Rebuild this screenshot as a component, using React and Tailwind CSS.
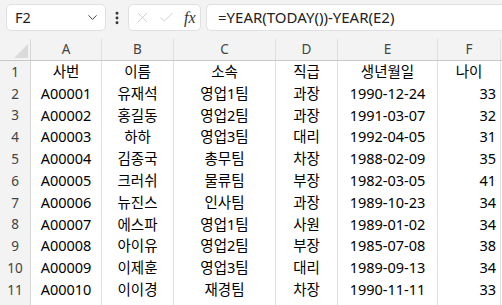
import { ChevronDown, EllipsisVertical, X, Check } from 'lucide-react';

const cols = ['A', 'B', 'C', 'D', 'E', 'F'];

const rows = [
    ['사번', '이름', '소속', '직급', '생년월일', '나이'],
    ['A00001', '유재석', '영업1팀', '과장', '1990-12-24', '33'],
    ['A00002', '홍길동', '영업2팀', '과장', '1991-03-07', '32'],
    ['A00003', '하하', '영업3팀', '대리', '1992-04-05', '31'],
    ['A00004', '김종국', '총무팀', '차장', '1988-02-09', '35'],
    ['A00005', '크러쉬', '물류팀', '부장', '1982-03-05', '41'],
    ['A00006', '뉴진스', '인사팀', '과장', '1989-10-23', '34'],
    ['A00007', '에스파', '영업1팀', '사원', '1989-01-02', '34'],
    ['A00008', '아이유', '영업2팀', '부장', '1985-07-08', '38'],
    ['A00009', '이제훈', '영업3팀', '대리', '1989-09-13', '34'],
    ['A00010', '이이경', '재경팀', '차장', '1990-11-11', '33'],
];

const gridCols = 'grid grid-cols-[31px_71px_72px_102px_62px_100px_63px_1fr]';

const App = () => {
    return (
        <div
            className="w-[502px] h-[305px] overflow-hidden bg-[#f3f3f3] text-[#1f1f1f]"
            style={{ fontFamily: '"Noto Sans", "Noto Sans CJK KR", sans-serif' }}
        >
            {/* formula bar */}
            <div className="flex items-start h-[39px] pt-[4px]">
                <div className="ml-[6px] w-[100px] h-[27px] flex items-center justify-between pl-[8px] pr-[5px] bg-white border border-[#e0e0e0] rounded-[5px]">
                    <span className="text-[14.5px]">F2</span>
                    <ChevronDown size={15} strokeWidth={1.6} className="text-[#444]" />
                </div>
                <div className="w-[22px] h-[27px] flex items-center justify-center">
                    <EllipsisVertical size={16} strokeWidth={2.4} className="text-[#333]" />
                </div>
                <div className="w-[73px] h-[27px] flex items-center pl-[5px] bg-white border border-[#e0e0e0] rounded-[5px]">
                    <X size={17} strokeWidth={1.1} className="text-[#c4c4c4]" />
                    <Check size={17} strokeWidth={1.1} className="ml-[7px] text-[#c4c4c4]" />
                    <span
                        className="ml-[9px] text-[16px] italic text-[#333] leading-none"
                        style={{ fontFamily: '"Liberation Serif", serif' }}
                    >
                        fx
                    </span>
                </div>
                <div className="ml-[5px] flex-1 h-[27px] flex items-center pl-[11px] bg-white border border-r-0 border-[#e0e0e0] rounded-l-[5px]">
                    <span className="text-[15px] text-[#222]">=YEAR(TODAY())-YEAR(E2)</span>
                </div>
            </div>

            {/* column headers */}
            <div className={`${gridCols} h-[22px] bg-[#f3f3f3] border-b border-[#c8c8c8]`}>
                <div className="relative border-r border-[#d8d8d8]">
                    <svg className="absolute left-[14px] top-[5px]" width="14" height="14" viewBox="0 0 14 14">
                        <polygon points="14,0 14,14 0,14" fill="#dadada" />
                    </svg>
                </div>
                {cols.map((c) => (
                    <div key={c} className="flex items-center justify-center border-r border-[#e0e0e0] text-[13.5px] text-[#444]">
                        {c}
                    </div>
                ))}
                <div />
            </div>

            {/* rows */}
            {[...rows, null].map((r, i) => (
                <div key={i} className={`${gridCols} h-[21.8px]`}>
                    <div className="flex items-center justify-center bg-[#f3f3f3] border-r border-b border-[#d8d8d8] text-[13.5px] text-[#444]">
                        {r ? i + 1 : ''}
                    </div>
                    {(r || ['', '', '', '', '', '']).map((v, j) => (
                        <div
                            key={j}
                            className={`flex items-center px-[4px] bg-white border-r border-b border-[#e1e1e1] text-[14.5px] text-black whitespace-nowrap ${
                                j === 5 && i > 0 ? 'justify-end' : 'justify-center'
                            }`}
                        >
                            {v}
                        </div>
                    ))}
                    <div className="bg-white border-b border-[#e1e1e1]" />
                </div>
            ))}
        </div>
    );
};

export default App;
